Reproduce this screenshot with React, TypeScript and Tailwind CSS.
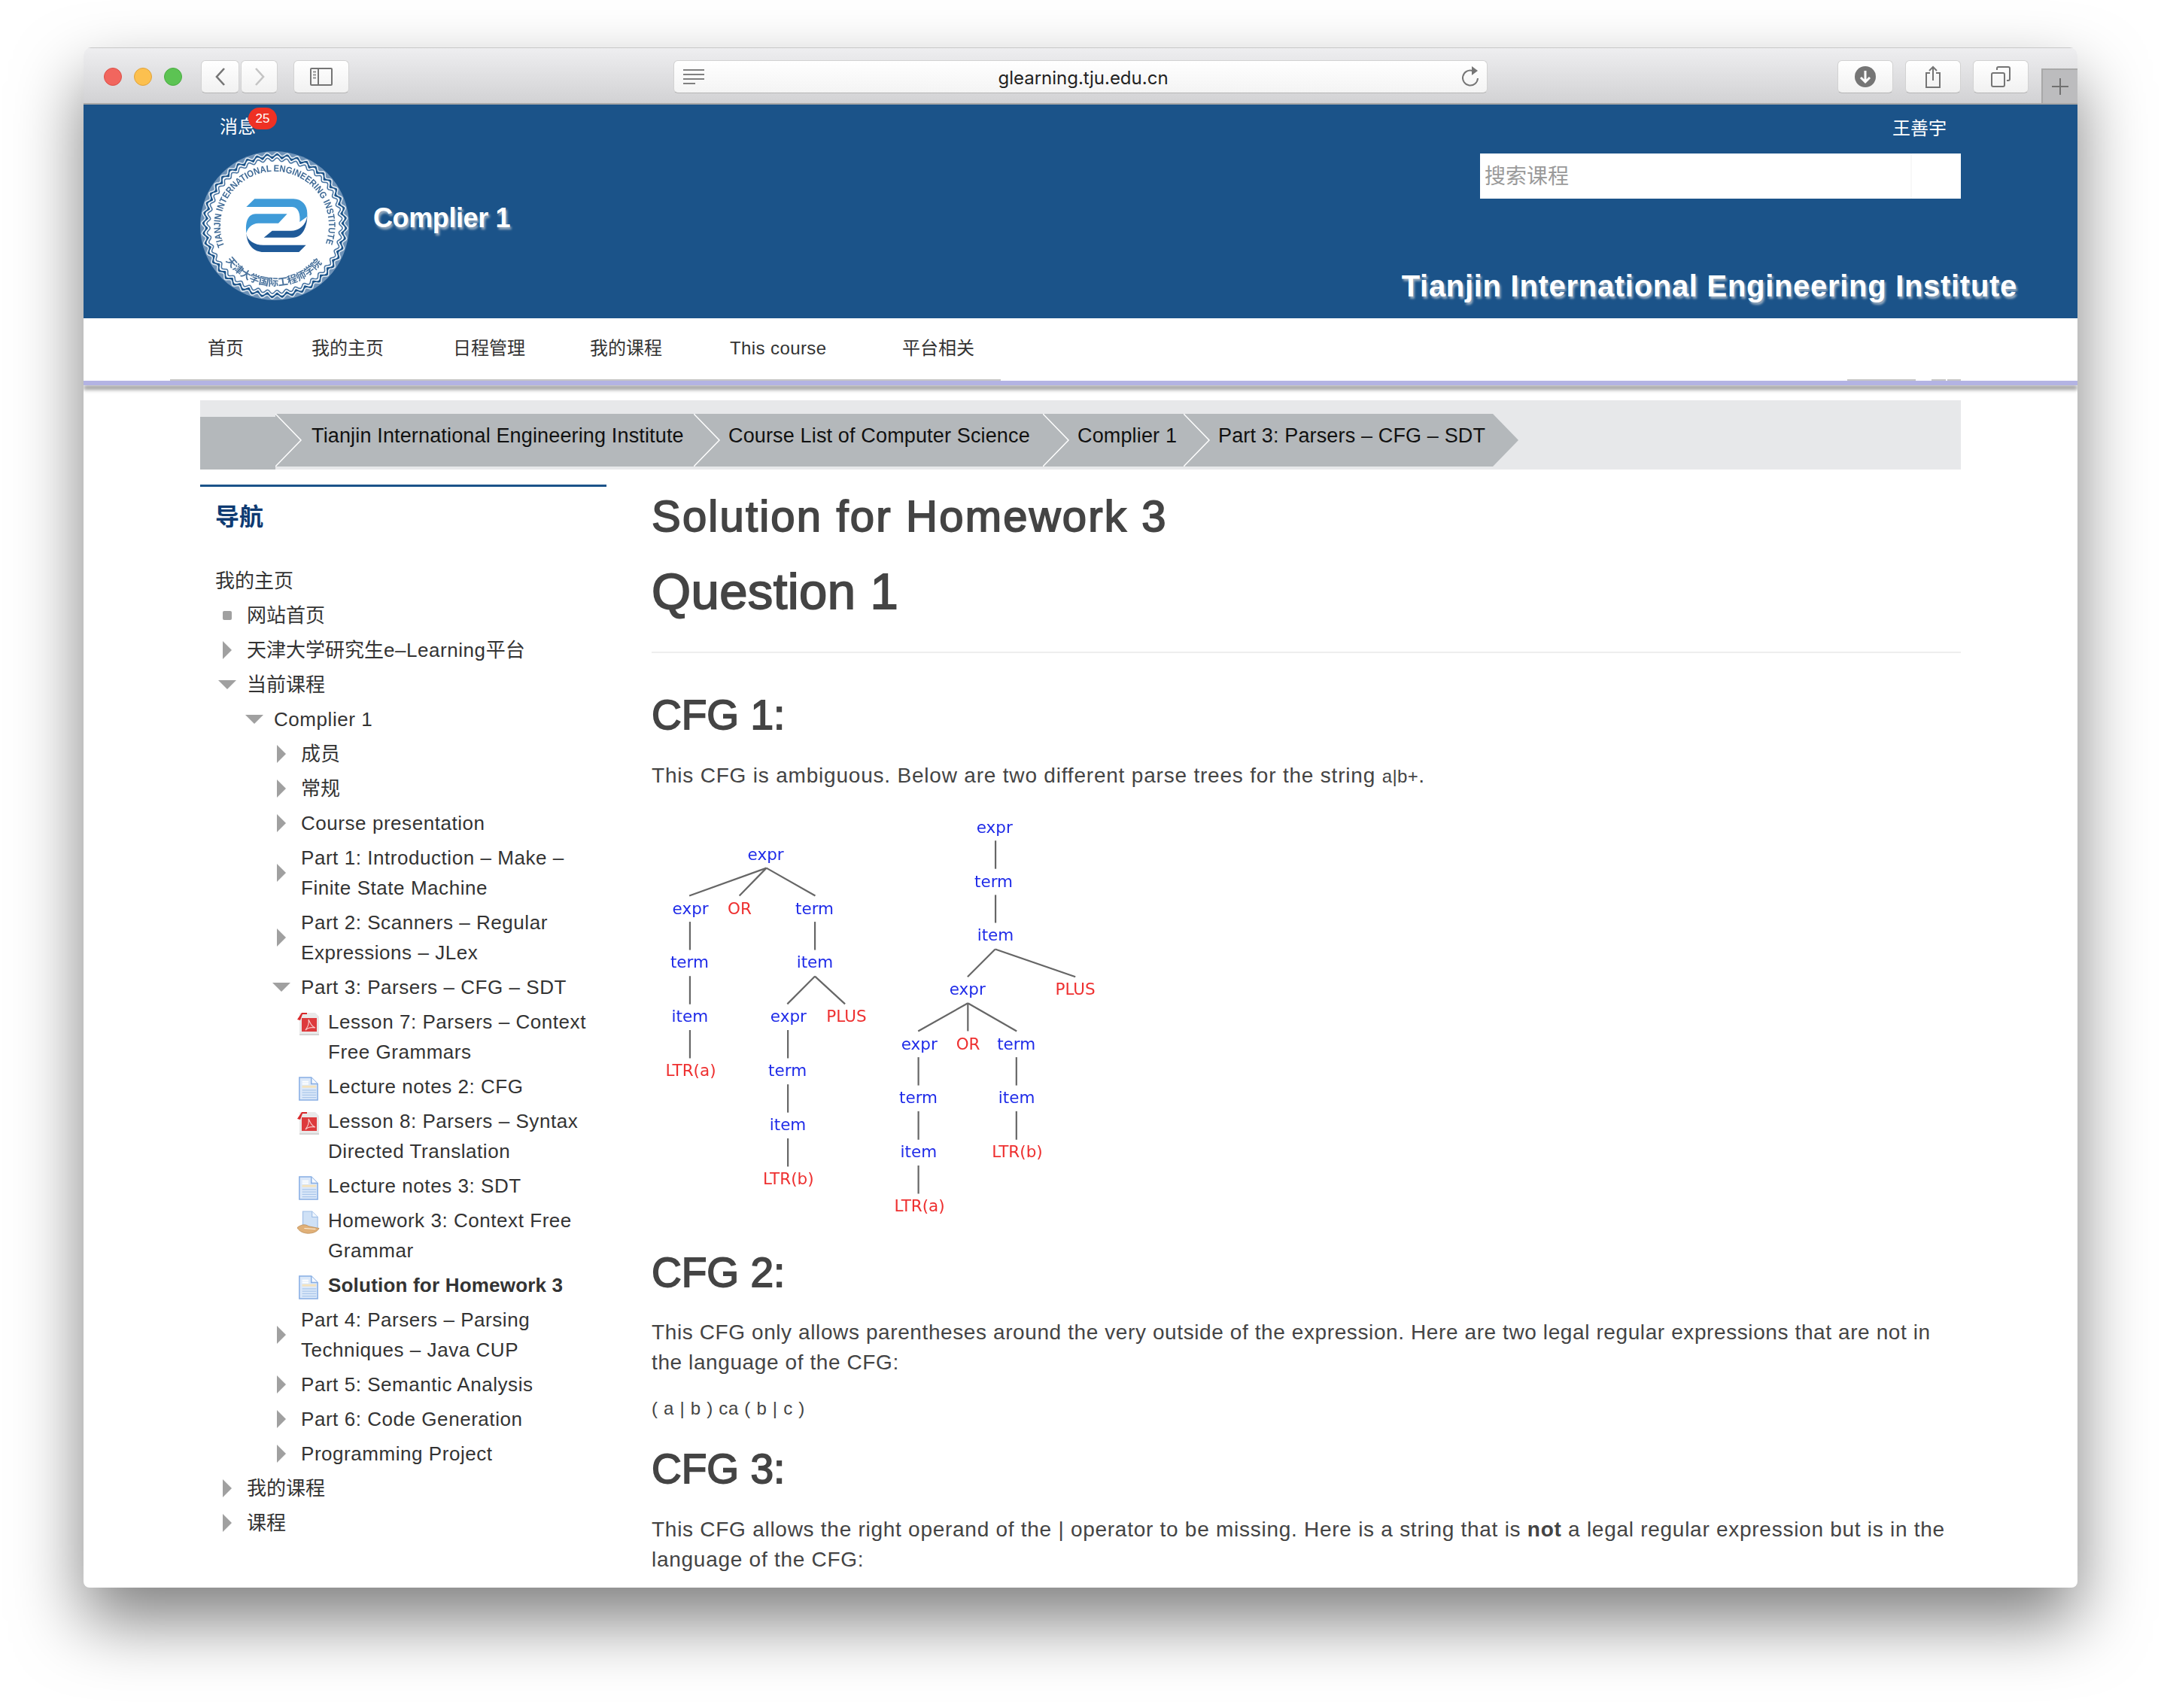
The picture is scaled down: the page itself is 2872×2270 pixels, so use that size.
import React from "react";

const X = (v: number) => v / 2.45;
const Y = (v: number) => v / 2.8;

const treeLines: number[][] = [
  [413,265,162,368],[413,265,325,368],[413,265,572,368],
  [164,465,164,570],[164,667,164,772],[164,868,164,973],
  [571,465,571,570],[571,668,481,771],[571,668,669,771],
  [483,868,483,973],[483,1070,483,1175],[483,1271,483,1376],
  [1159,163,1159,268],[1159,365,1159,469],[1158,567,1068,670],[1158,567,1419,670],
  [1069,768,907,872],[1069,768,1069,872],[1069,768,1228,872],
  [908,969,908,1074],[908,1170,908,1276],[908,1372,908,1477],
  [1227,969,1227,1074],[1227,1170,1227,1276],
];
const treeText: [string, number, number, number][] = [
  ["expr",410,215,0],["expr",165,416,0],["OR",325,416,1],["term",569,416,0],["term",162,617,0],["item",570,617,0],
  ["item",163,818,0],["expr",484,818,0],["PLUS",673,818,1],["LTR(a)",166,1019,1],["term",481,1020,0],["item",482,1221,0],["LTR(b)",484,1422,1],
  ["expr",1155,114,0],["term",1152,315,0],["item",1158,516,0],["expr",1067,718,0],["PLUS",1418,718,1],
  ["expr",910,920,0],["OR",1069,920,1],["term",1226,920,0],["term",907,1121,0],["item",1227,1121,0],["item",908,1322,0],["LTR(b)",1229,1322,1],["LTR(a)",911,1523,1],
];

function ParseTrees() {
  return (
    <svg width="640" height="560" viewBox="0 0 640 560" className="block blur-[0.6px]">
      {treeLines.map((l, i) => (
        <line key={i} x1={X(l[0])} y1={Y(l[1])} x2={X(l[2])} y2={Y(l[3])} stroke="#666666" strokeWidth="2.2" />
      ))}
      {treeText.map((t, i) => (
        <text key={i} x={X(t[1]) + 0.3} y={Y(t[2]) + 7} textAnchor="middle" fontSize="21.5" fontFamily="DejaVu Sans" fill={t[3] ? "#ee3030" : "#1f2be8"}>{t[0]}</text>
      ))}
    </svg>
  );
}

function wavy(r: number, amp: number, n: number) {
  const pts: string[] = [];
  const steps = n * 8;
  for (let i = 0; i <= steps; i++) {
    const a = (i / steps) * Math.PI * 2;
    const rr = r + amp * Math.sin(a * n);
    pts.push(`${(105 + rr * Math.cos(a)).toFixed(2)},${(105 + rr * Math.sin(a)).toFixed(2)}`);
  }
  return "M" + pts.join("L") + "Z";
}

function Logo() {
  return (
    <svg width="210" height="210" viewBox="0 0 210 210" className="block blur-[0.6px]">
      <circle cx="105" cy="105" r="99" fill="#6f93b8" />
      <path d={wavy(95, 2.2, 44)} fill="#1b5389" stroke="#dfe8f0" strokeWidth="1.6" />
      <path d={wavy(90, 2.4, 44)} fill="#fff" stroke="#fff" strokeWidth="2" />
      <path d={wavy(88, 2.2, 44)} fill="none" stroke="#4a76a3" strokeWidth="1.6" />
      <circle cx="105" cy="105" r="84" fill="#fff" />
      <defs>
        <path id="logoTop" d="M38.3 132 A72 72 0 1 1 171.7 132" />
        <path id="logoBottom" d="M40 151.6 A80 80 0 0 0 170 151.6" />
      </defs>
      <text fontSize="12.5" fontWeight="700" fill="#3f6a96" fontFamily="Liberation Sans">
        <textPath href="#logoTop" textLength="278" lengthAdjust="spacingAndGlyphs">TIANJIN INTERNATIONAL ENGINEERING INSTITUTE</textPath>
      </text>
      <text fontSize="13.5" fontWeight="700" fill="#4a729c" fontFamily="Noto Sans CJK SC">
        <textPath href="#logoBottom" textLength="148">天津大学国际工程师学院</textPath>
      </text>
      <g transform="scale(0.33333)">
        <path d="M235 208 H390 C425 208 445 235 445 265 L445 278 L415 300 C418 270 410 240 385 240 H202 Z" fill="#3f9bd8" />
        <path d="M240 268 H365 L330 305 H250 C225 305 205 325 203 345 C198 320 200 268 240 268 Z" fill="#3f9bd8" />
        <path d="M445 275 C440 315 410 335 380 335 H305 L272 362 H390 C425 362 445 320 445 275 Z" fill="#1f5a99" />
        <path d="M202 345 C205 395 235 420 270 420 H412 L440 392 H270 C235 392 205 375 202 345 Z" fill="#1f5a99" />
      </g>
    </svg>
  );
}

const Btn = ({ w, children }: { w: string; children?: React.ReactNode }) => (
  <div className={`${w} h-[44px] rounded-[6px] bg-gradient-to-b from-[#ffffff] to-[#f1f1f1] border border-[#d2d2d2] border-b-[#b5b5b5] flex items-center justify-center`}>{children}</div>
);

function Toolbar() {
  return (
    <div className="h-[76px] shrink-0 flex items-start bg-gradient-to-b from-[#eeeef0] to-[#d2d2d4] border-b-2 border-[#a8a8a8] border-t border-t-[#c8c8c8] pt-[16px] pl-[27px] relative">
      <div className="flex gap-[16px] mt-[10px]">
        <div className="w-[24px] h-[24px] rounded-full bg-[#f1665e] border border-[#dc4f47]" />
        <div className="w-[24px] h-[24px] rounded-full bg-[#fcc04f] border border-[#e0a23a]" />
        <div className="w-[24px] h-[24px] rounded-full bg-[#5cc353] border border-[#49ac41]" />
      </div>
      <div className="flex gap-[2px] ml-[26px] -translate-x-[1px]">
        <Btn w="w-[51px]">
          <svg width="16" height="26" viewBox="0 0 16 26"><path d="M13 2 L3 13 L13 24" fill="none" stroke="#757575" strokeWidth="2.6" /></svg>
        </Btn>
        <Btn w="w-[49px]">
          <svg width="16" height="26" viewBox="0 0 16 26"><path d="M3 2 L13 13 L3 24" fill="none" stroke="#c4c4c4" strokeWidth="2.6" /></svg>
        </Btn>
      </div>
      <div className="ml-[20px]">
        <Btn w="w-[74px]">
          <svg width="30" height="24" viewBox="0 0 30 24"><rect x="1" y="1" width="28" height="22" rx="1" fill="none" stroke="#757575" strokeWidth="2" /><path d="M11 1 V23" stroke="#757575" strokeWidth="2" /><path d="M4 5.5 H8 M4 9.5 H8 M4 13.5 H8" stroke="#909090" strokeWidth="2" /></svg>
        </Btn>
      </div>
      <div className="ml-[431px] w-[1082px] h-[44px] rounded-[6px] bg-gradient-to-b from-[#ffffff] to-[#f4f4f4] border border-[#d2d2d2] border-b-[#b5b5b5] flex items-center pl-[12px] pr-[9px]">
        <svg width="28" height="22" viewBox="0 0 28 22" className="shrink-0"><path d="M0 2 H28 M0 8 H28 M0 14 H28 M0 20 H16" stroke="#808080" strokeWidth="2" /></svg>
        <div className="flex-1 text-center text-[24px] leading-[30px] text-[#222] [font-family:'Inter',sans-serif] pt-[3px]">glearning.tju.edu.cn</div>
        <svg width="24" height="30" viewBox="0 0 24 30" className="shrink-0"><path d="M14 7 A10 10 0 1 0 21 17" fill="none" stroke="#757575" strokeWidth="2" /><path d="M13 1 L21 7 L13 13 Z" fill="#757575" /></svg>
      </div>
      <div className="flex gap-[16px] ml-[465px]">
        <Btn w="w-[74px]">
          <svg width="28" height="28" viewBox="0 0 28 28"><circle cx="14" cy="14" r="14" fill="#757575" /><path d="M14 6 V21 M8 15 L14 21 L20 15" fill="none" stroke="#fff" strokeWidth="3" /></svg>
        </Btn>
        <Btn w="w-[74px]">
          <svg width="24" height="30" viewBox="0 0 24 30"><path d="M8 10 H3 V29 H21 V10 H16" fill="none" stroke="#757575" strokeWidth="2" /><path d="M12 2 V20 M7 7 L12 2 L17 7" fill="none" stroke="#757575" strokeWidth="2" /></svg>
        </Btn>
        <Btn w="w-[74px]">
          <svg width="26" height="28" viewBox="0 0 26 28"><rect x="1" y="9" width="17" height="18" rx="2" fill="none" stroke="#757575" strokeWidth="2" /><path d="M8 5 V3 Q8 1 10 1 H23 Q25 1 25 3 V17 Q25 19 23 19 H21" fill="none" stroke="#757575" strokeWidth="2" /></svg>
        </Btn>
      </div>
      <div className="absolute right-0 bottom-0 w-[48px] h-[46px] bg-[#bcbcbe] border-l-2 border-t-2 border-[#a8a8a8] flex items-center justify-center">
        <svg width="24" height="24" viewBox="0 0 24 24"><path d="M12 1 V23 M1 12 H23" stroke="#707070" strokeWidth="2" /></svg>
      </div>
    </div>
  );
}

function Header() {
  return (
    <div className="h-[284px] shrink-0 bg-[#1b5389] flex justify-between text-white">
      <div className="pl-[155px]">
        <div className="relative h-[56px] pl-[26px] pt-[16px] text-[24px] leading-[28px]">
          <span>消息</span>
          <span className="absolute left-[64px] top-[4px] w-[38px] h-[29px] rounded-full bg-[#ee3124] text-[17px] leading-[29px] text-center">25</span>
        </div>
        <div className="flex items-center -ml-[6px]">
          <Logo />
          <div className="ml-[26px] -mt-[20px] text-[36px] leading-[46px] tracking-[-0.4px] font-bold [text-shadow:2px_3px_3px_rgba(220,220,220,0.65)]">Complier 1</div>
        </div>
      </div>
      <div className="flex flex-col items-end pr-[80px]">
        <div className="mr-[94px] mt-[18px] text-[24px] leading-[28px]">王善宇</div>
        <div className="mr-[75px] mt-[19px] w-[639px] h-[60px] bg-white text-[#9a9a9a] text-[28px] leading-[62px] pl-[6px] flex justify-between">
          <span>搜索课程</span>
          <span className="w-[67px] border-l-2 border-[#f8f8f8]" />
        </div>
        <div className="mt-[90px] text-[40px] leading-[52px] tracking-[0.7px] font-bold [text-shadow:2px_3px_3px_rgba(220,220,220,0.65)]">Tianjin International Engineering Institute</div>
      </div>
    </div>
  );
}

function Nav() {
  const items: [string, string][] = [
    ["首页", "w-[138px]"], ["我的主页", "w-[188px]"], ["日程管理", "w-[182px]"], ["我的课程", "w-[186px]"], ["This course", "w-[229px] tracking-[0.4px]"], ["平台相关", "w-[200px]"],
  ];
  return (
    <div className="shrink-0">
      <div className="h-[81px] flex pl-[165px] text-[24px] leading-[80px] text-[#333] bg-white">
        {items.map(([t, w]) => <div key={t} className={w}>{t}</div>)}
      </div>
      <div className="h-[2px] flex">
        <div className="ml-[115px] w-[1104px] bg-[#c6c6c6]" />
        <div className="ml-[1125px] w-[91px] bg-[#c6c6c6]" />
        <div className="ml-[21px] w-[19px] bg-[#c6c6c6]" />
        <div className="ml-[2px] w-[18px] bg-[#c6c6c6]" />
      </div>
      <div className="h-[6px] bg-[#b3b3e3] shadow-[0_6px_5px_rgba(0,0,0,0.4)]" />
    </div>
  );
}

function Breadcrumb() {
  const items: [string, string][] = [
    ["Tianjin International Engineering Institute", "w-[556px] pl-[48px]"],
    ["Course List of Computer Science", "w-[464px] pl-[46px]"],
    ["Complier 1", "w-[187px] pl-[46px]"],
    ["Part 3: Parsers – CFG – SDT", "w-[411px] pl-[46px]"],
  ];
  const Chev = () => (
    <svg width="36" height="70" viewBox="0 0 36 70" className="absolute left-0 top-0"><path d="M0 0 L34 35 L0 70" fill="none" stroke="#ffffff" strokeWidth="1.5" /></svg>
  );
  return (
    <div className="mt-[20px] mx-[155px] h-[92px] bg-[#e7e8ea] flex items-start">
      <div className="w-[100px] h-[70px] mt-[22px] bg-[#b4b8bb]" />
      <div className="flex mt-[18px]">
        {items.map(([t, w]) => (
          <div key={t} className={`${w} relative h-[70px] bg-[#b4b8bb] text-[27px] tracking-[0.15px] leading-[58px] text-[#111] whitespace-nowrap`}>
            <Chev />
            {t}
          </div>
        ))}
        <svg width="34" height="70" viewBox="0 0 34 70" className="block"><path d="M0 0 L34 35 L0 70 Z" fill="#b4b8bb" /></svg>
      </div>
    </div>
  );
}

const Tri = ({ d }: { d: "r" | "d" | "s" }) =>
  d === "r" ? (
    <svg width="12" height="24" viewBox="0 0 12 24"><path d="M0 0 L12 12 L0 24 Z" fill="#a0a0a0" /></svg>
  ) : d === "d" ? (
    <svg width="24" height="12" viewBox="0 0 24 12"><path d="M0 0 H24 L12 12 Z" fill="#a0a0a0" /></svg>
  ) : (
    <svg width="12" height="12" viewBox="0 0 12 12"><rect width="12" height="12" rx="2" fill="#a0a0a0" /></svg>
  );

const Pdf = () => (
  <svg width="30" height="32" viewBox="0 0 30 32">
    <path d="M3 1 H24 L29 6 V31 H3 Z" fill="#e9e9e9" />
    <path d="M3 29 H29 V31 H3 Z" fill="#d4d4d4" />
    <rect x="6" y="8" width="20" height="18" fill="#dd3a3c" />
    <path d="M0 10 L6 1 L13 1 L13 3 L7 3 L4 11 Z" fill="#d8282a" />
    <path d="M11 24 C14 20 16 14 15 10 C18 16 20 20 24 21 C19 20 14 21 11 24 Z" fill="none" stroke="#f7c9c9" strokeWidth="1.2" />
  </svg>
);
const Doc = () => (
  <svg width="28" height="32" viewBox="0 0 30 34">
    <path d="M2 1 H19 L28 10 V33 H2 Z" fill="#dbe8f9" stroke="#86ade3" strokeWidth="1.6" />
    <path d="M19 1 V10 H28" fill="#f5f9ff" stroke="#86ade3" strokeWidth="1.6" />
    <path d="M6 7 H15 M6 10 H15" stroke="#ffffff" strokeWidth="2" />
    <path d="M6 14 H26" stroke="#f4e2bb" strokeWidth="3" />
    <path d="M6 19 H26 M6 22.5 H26 M6 26 H26 M6 29.5 H26" stroke="#aac6ea" strokeWidth="1.4" />
  </svg>
);
const Hand = () => (
  <svg width="30" height="32" viewBox="0 0 32 34">
    <path d="M8 1 H21 L29 9 V25 H8 Z" fill="#cfe1f6" stroke="#9dbde6" strokeWidth="1.2" />
    <path d="M21 1 V9 H29" fill="#eef5fd" stroke="#9dbde6" strokeWidth="1.2" />
    <path d="M0 24 C6 19 12 19 16 22 L31 25 C29 30 20 33 13 32 C6 31 2 28 0 24 Z" fill="#e0b078" stroke="#b98a52" strokeWidth="0.8" />
    <path d="M10 25 L26 26" stroke="#fff3e0" strokeWidth="1.2" />
  </svg>
);

type RowT = { t: string; l: 0 | 1 | 2 | 3 | 4; i?: "r" | "d" | "s" | "p" | "n" | "h"; b?: boolean };
const rows: RowT[] = [
  { t: "我的主页", l: 0 },
  { t: "网站首页", l: 1, i: "s" },
  { t: "天津大学研究生e–Learning平台", l: 1, i: "r" },
  { t: "当前课程", l: 1, i: "d" },
  { t: "Complier 1", l: 2, i: "d" },
  { t: "成员", l: 3, i: "r" },
  { t: "常规", l: 3, i: "r" },
  { t: "Course presentation", l: 3, i: "r" },
  { t: "Part 1: Introduction – Make – Finite State Machine", l: 3, i: "r" },
  { t: "Part 2: Scanners – Regular Expressions – JLex", l: 3, i: "r" },
  { t: "Part 3: Parsers – CFG – SDT", l: 3, i: "d" },
  { t: "Lesson 7: Parsers – Context Free Grammars", l: 4, i: "p" },
  { t: "Lecture notes 2: CFG", l: 4, i: "n" },
  { t: "Lesson 8: Parsers – Syntax Directed Translation", l: 4, i: "p" },
  { t: "Lecture notes 3: SDT", l: 4, i: "n" },
  { t: "Homework 3: Context Free Grammar", l: 4, i: "h" },
  { t: "Solution for Homework 3", l: 4, i: "n", b: true },
  { t: "Part 4: Parsers – Parsing Techniques – Java CUP", l: 3, i: "r" },
  { t: "Part 5: Semantic Analysis", l: 3, i: "r" },
  { t: "Part 6: Code Generation", l: 3, i: "r" },
  { t: "Programming Project", l: 3, i: "r" },
  { t: "我的课程", l: 1, i: "r" },
  { t: "课程", l: 1, i: "r" },
];
const indent = ["", "-ml-[2px]", "ml-[34px]", "ml-[70px]", "ml-[106px]"];

const Label = ({ t, bold }: { t: string; bold?: boolean }) => (
  <>
    {t.split(/([\x00-\x7f–]+)/).map((p, i) =>
      i % 2 === 1 ? <span key={i} className={bold ? "tracking-[0.2px]" : "tracking-[0.55px]"}>{p}</span> : p
    )}
  </>
);

function Sidebar() {
  return (
    <div className="w-[540px] shrink-0 border-t-[3px] border-[#1b5389] pl-[20px] pr-[20px]">
      <div className="text-[32px] leading-[40px] font-bold text-[#0e3a72] mt-[20px] mb-[42px]">导航</div>
      {rows.map((r) => {
        const file = r.i === "p" || r.i === "n" || r.i === "h";
        return (
          <div key={r.t} className={`flex ${file ? "items-start" : "items-center"} py-[3px] text-[26px] leading-[40px] text-[#333] ${indent[r.l]}`}>
            {r.i && (
              <div className={`w-[36px] mr-[8px] shrink-0 flex justify-center ${file ? "pt-[7px]" : ""}`}>
                {r.i === "p" ? <Pdf /> : r.i === "n" ? <Doc /> : r.i === "h" ? <Hand /> : <Tri d={r.i} />}
              </div>
            )}
            <div className={r.b ? "font-bold" : ""}><Label t={r.t} bold={r.b} /></div>
          </div>
        );
      })}
    </div>
  );
}

const H = ({ children, cls }: { children: React.ReactNode; cls: string }) => (
  <div className={`text-[#444] [-webkit-text-stroke-width:1.8px] [-webkit-text-stroke-color:#444] ${cls}`}>{children}</div>
);

function Main() {
  return (
    <div className="ml-[60px] flex-1 min-w-0 text-[28px] leading-[40px] text-[#444]">
      <H cls="text-[58px] leading-[64px] tracking-[2.2px] mt-[10px]">Solution for Homework 3</H>
      <H cls="text-[67px] leading-[72px] tracking-[0.4px] mt-[32px]">Question 1</H>
      <div className="h-[2px] bg-[#eeeeee] mt-[44px]" />
      <H cls="text-[55px] leading-[64px] mt-[50px]">CFG 1:</H>
      <div className="mt-[29px] tracking-[0.8px]">This CFG is ambiguous. Below are two different parse trees for the string <span className="text-[24px] tracking-[0.4px]">a|b+</span>.</div>
      <div className="-ml-[16px] mt-[7px]"><ParseTrees /></div>
      <H cls="text-[55px] leading-[64px] mt-[40px]">CFG 2:</H>
      <div className="mt-[28px] tracking-[0.6px]">This CFG only allows parentheses around the very outside of the expression. Here are two legal regular expressions that are not in the language of the CFG:</div>
      <div className="mt-[21px] text-[24px] tracking-[0.7px]">( a | b ) ca ( b | c )</div>
      <H cls="text-[55px] leading-[64px] mt-[28px]">CFG 3:</H>
      <div className="mt-[29px] tracking-[0.73px]">This CFG allows the right operand of the | operator to be missing. Here is a string that is <b>not</b> a legal regular expression but is in the language of the CFG:</div>
    </div>
  );
}

export default function App() {
  return (
    <div className="w-[2872px] h-[2270px] bg-white pt-[63px] pl-[111px] overflow-hidden [font-family:'Liberation_Sans','Noto_Sans_CJK_SC',sans-serif]">
      <div className="w-[2650px] h-[2047px] rounded-t-[10px] rounded-b-[8px] overflow-hidden bg-white shadow-[0_44px_90px_rgba(0,0,0,0.5)] flex flex-col">
        <Toolbar />
        <Header />
        <Nav />
        <Breadcrumb />
        <div className="flex mt-[20px] mx-[155px]">
          <Sidebar />
          <Main />
        </div>
      </div>
    </div>
  );
}
